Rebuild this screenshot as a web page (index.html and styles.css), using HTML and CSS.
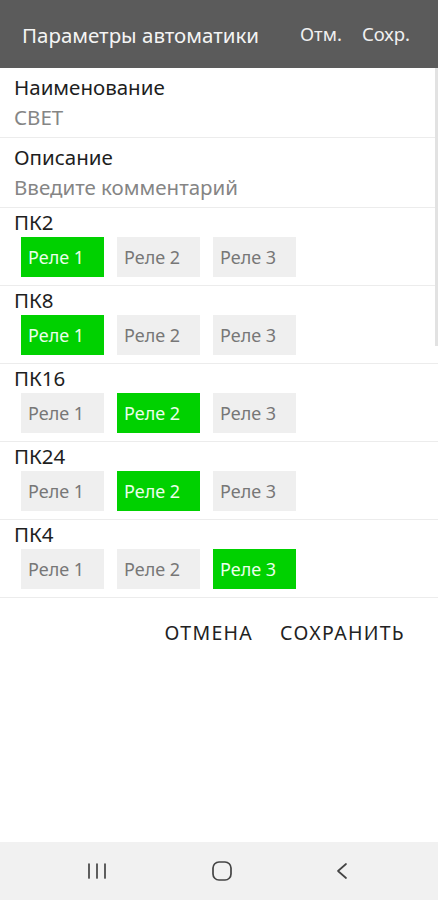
FILE: index.html
```html
<!DOCTYPE html>
<html lang="ru">
<head>
<meta charset="utf-8">
<title>Параметры автоматики</title>
<link rel="stylesheet" href="styles.css">
</head>
<body>
<div class="screen">
  <header class="appbar">
    <div class="appbar-title">Параметры автоматики</div>
    <div class="appbar-actions">
      <span class="appbar-action">Отм.</span>
      <span class="appbar-action">Сохр.</span>
    </div>
  </header>
  <main class="content">
    <div class="scrollbar"></div>
    <section class="field">
      <div class="field-label">Наименование</div>
      <div class="field-value">СВЕТ</div>
    </section>
    <section class="field">
      <div class="field-label">Описание</div>
      <div class="field-value">Введите комментарий</div>
    </section>
    <section class="pk">
      <div class="pk-label">ПК2</div>
      <div class="relays">
        <div class="relay on">Реле 1</div>
        <div class="relay">Реле 2</div>
        <div class="relay">Реле 3</div>
      </div>
    </section>
    <section class="pk">
      <div class="pk-label">ПК8</div>
      <div class="relays">
        <div class="relay on">Реле 1</div>
        <div class="relay">Реле 2</div>
        <div class="relay">Реле 3</div>
      </div>
    </section>
    <section class="pk">
      <div class="pk-label">ПК16</div>
      <div class="relays">
        <div class="relay">Реле 1</div>
        <div class="relay on">Реле 2</div>
        <div class="relay">Реле 3</div>
      </div>
    </section>
    <section class="pk">
      <div class="pk-label">ПК24</div>
      <div class="relays">
        <div class="relay">Реле 1</div>
        <div class="relay on">Реле 2</div>
        <div class="relay">Реле 3</div>
      </div>
    </section>
    <section class="pk">
      <div class="pk-label">ПК4</div>
      <div class="relays">
        <div class="relay">Реле 1</div>
        <div class="relay">Реле 2</div>
        <div class="relay on">Реле 3</div>
      </div>
    </section>
    <div class="footer-actions">
      <span class="footer-btn">ОТМЕНА</span>
      <span class="footer-btn">СОХРАНИТЬ</span>
    </div>
  </main>
  <nav class="navbar">
    <svg class="nav-icon" width="20" height="20" viewBox="0 0 20 20">
      <g stroke="#444" stroke-width="1.7" stroke-linecap="round">
        <line x1="2" y1="3" x2="2" y2="17"/>
        <line x1="10" y1="3" x2="10" y2="17"/>
        <line x1="18" y1="3" x2="18" y2="17"/>
      </g>
    </svg>
    <svg class="nav-icon" width="22" height="22" viewBox="0 0 22 22">
      <rect x="2" y="2" width="18" height="18" rx="6" ry="6" fill="none" stroke="#444" stroke-width="1.7"/>
    </svg>
    <svg class="nav-icon" width="12" height="20" viewBox="0 0 12 20">
      <polyline points="10,3 2,10 10,17" fill="none" stroke="#444" stroke-width="1.7" stroke-linecap="round" stroke-linejoin="round"/>
    </svg>
  </nav>
</div>
</body>
</html>
```
FILE: styles.css
```css
* { box-sizing: border-box; }
html, body { margin: 0; padding: 0; }
body {
  font-family: "Noto Sans", "Open Sans", sans-serif;
  background: #ffffff;
  color: #1a1a1a;
}
.screen {
  width: 438px;
  height: 900px;
  display: flex;
  flex-direction: column;
  overflow: hidden;
}
.appbar {
  height: 68px;
  flex: none;
  background: #5b5b5b;
  display: flex;
  align-items: center;
  padding: 2px 28px 0 22px;
  justify-content: space-between;
}
.appbar-title {
  color: #f4f4f4;
  font-size: 20.5px;
}
.appbar-actions {
  display: flex;
  gap: 20px;
  margin-top: -4px;
}
.appbar-action {
  color: #f0f0f0;
  font-size: 18.5px;
}
.content {
  flex: 1;
  position: relative;
  display: flex;
  flex-direction: column;
}
.scrollbar {
  position: absolute;
  right: 0;
  top: 0;
  width: 3px;
  height: 278px;
  background: #e2e2e2;
}
.field {
  padding: 4px 14px 5px;
  border-bottom: 1px solid #ececec;
}
.field-label {
  font-size: 20.5px;
  line-height: 30px;
  color: #1e1e1e;
}
.field-value {
  font-size: 20.5px;
  line-height: 30px;
  color: #858585;
}
.pk {
  padding: 0 14px 7px;
  border-bottom: 1px solid #ececec;
  height: 78px;
}
.pk-label {
  font-size: 20.5px;
  line-height: 26px;
  color: #1e1e1e;
  margin-top: 1px;
}
.relays {
  display: flex;
  gap: 13px;
  padding-left: 7px;
  margin-top: 2px;
}
.relay {
  width: 83px;
  height: 40px;
  background: #efefef;
  color: #777;
  font-size: 18px;
  display: flex;
  align-items: center;
  padding-left: 7px;
}
.relay.on {
  background: #00d100;
  color: #eaffea;
}
.footer-actions {
  display: flex;
  justify-content: flex-end;
  gap: 27px;
  padding: 21px 33px 0 0;
}
.footer-btn {
  font-size: 19.5px;
  color: #222;
  letter-spacing: 1.3px;
}
.navbar {
  height: 58px;
  flex: none;
  background: #f1f1f1;
  display: flex;
  align-items: center;
  justify-content: space-between;
  padding: 0 90px 0 87px;
}
.nav-icon { display: block; }
```
